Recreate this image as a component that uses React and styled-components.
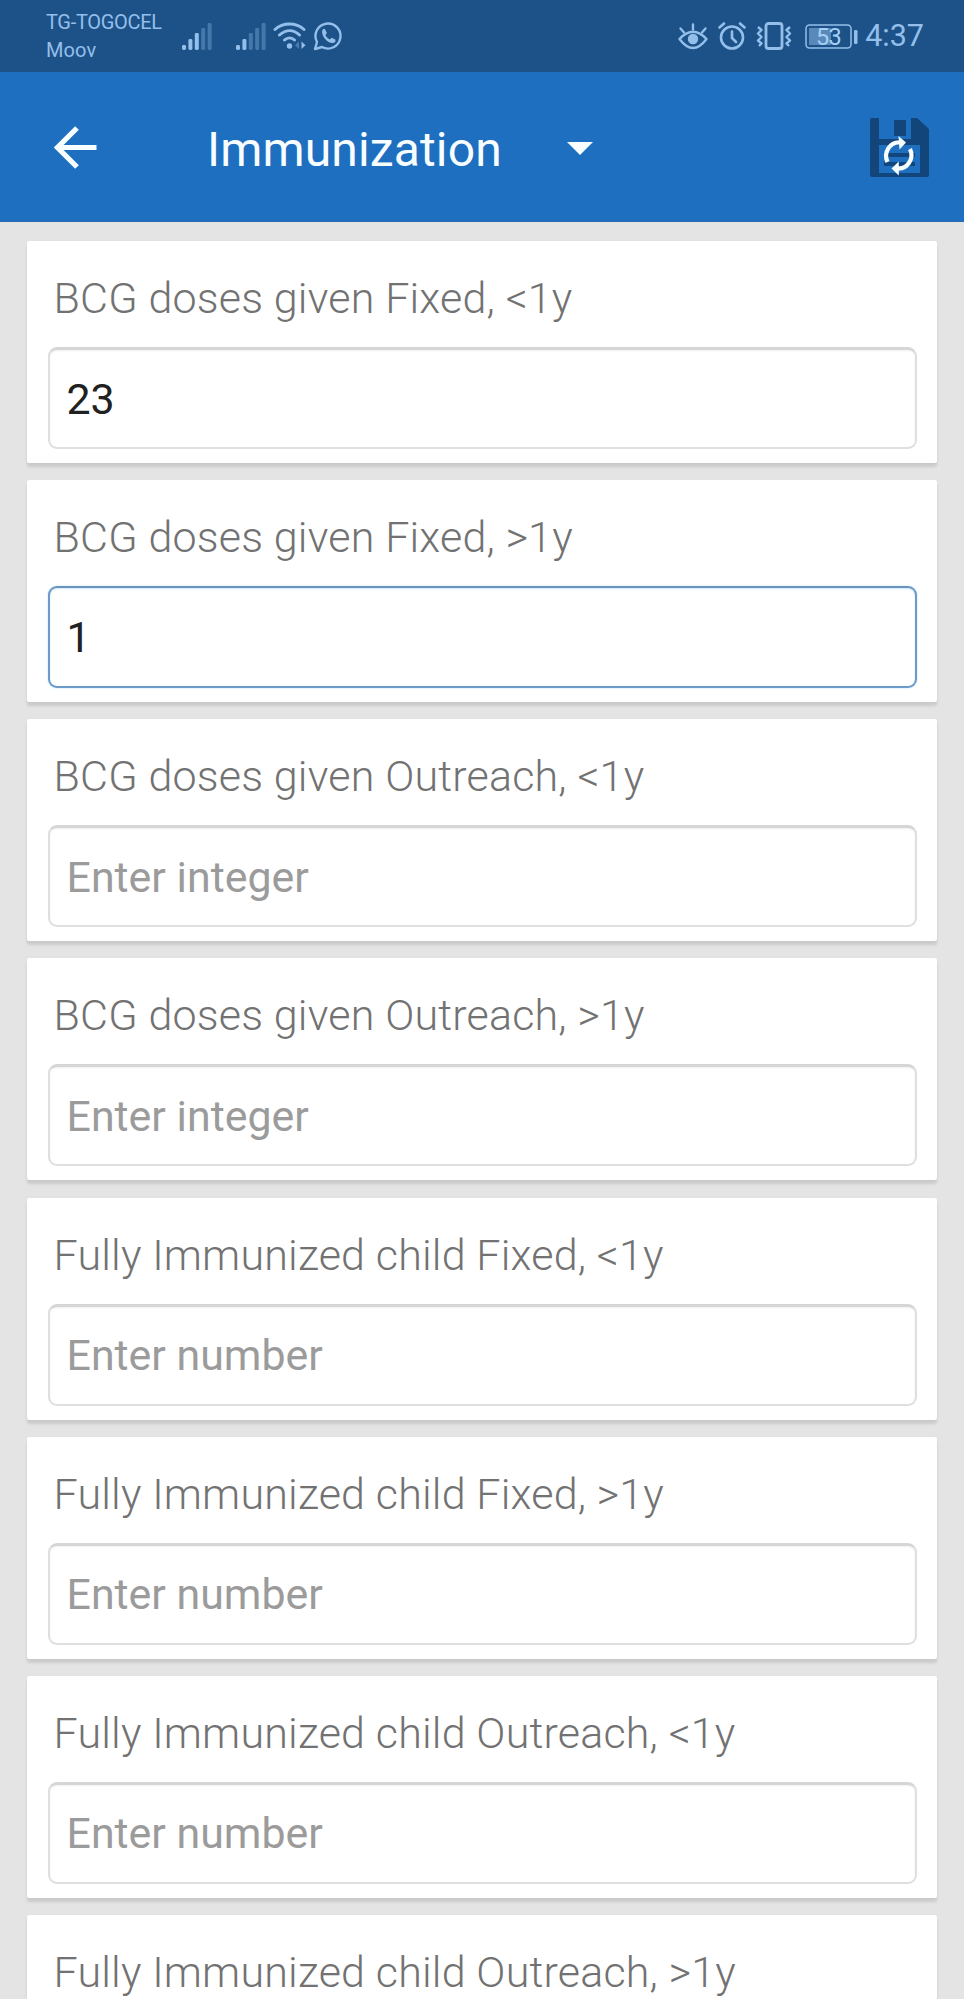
import React from "react";
import styled, { createGlobalStyle } from "styled-components";

const GlobalStyle = createGlobalStyle`
  * { box-sizing: border-box; }
  html, body { margin: 0; padding: 0; }
  body { background: #e4e4e4; font-family: Roboto, "Liberation Sans", sans-serif; }
`;

const Screen = styled.main`
  width: 964px;
  height: 1999px;
  overflow: hidden;
  background: #e4e4e4;
`;

const StatusBar = styled.div`
  display: flex;
  align-items: center;
  height: 72px;
  padding: 0 40px 0 46px;
  background: #1d5288;
  color: #93bfea;
`;

const Carriers = styled.div`
  width: 134px;
  font-size: 20px;
  line-height: 28.5px;
`;

const Carrier = styled.div`
  white-space: nowrap;
  letter-spacing: ${(p) => p.$spacing || "0"};
`;

const StatusIcon = styled.svg`
  flex: none;
  margin-left: ${(p) => p.$gap || 0}px;
`;

const Clock = styled.div`
  margin-left: auto;
  font-size: 30.5px;
  line-height: 72px;
`;

const StatusRight = styled.div`
  display: flex;
  align-items: center;
  margin-left: auto;
  width: 246px;
`;

const AppBar = styled.header`
  display: flex;
  align-items: center;
  height: 150px;
  padding: 1px 35px 0 54px;
  background: #1f6fc1;
  border-bottom: 1px solid #2a6bac;
`;

const Title = styled.h1`
  margin: 5px 0 0 110px;
  width: 296px;
  white-space: nowrap;
  color: #f8feff;
  font-size: 48px;
  font-weight: 400;
  line-height: 60px;
  letter-spacing: 0.15px;
`;

const Caret = styled.svg`
  margin: 3px 0 0 64px;
`;

const SaveIcon = styled.svg`
  margin-left: auto;
`;

const Form = styled.section`
  display: flex;
  flex-direction: column;
  gap: 17.15px;
  padding: 19px 27px 0 27px;
`;

const Card = styled.div`
  flex: none;
  height: 222px;
  padding: 29px 20.5px 0 20.5px;
  background: #fff;
  border-radius: 2px;
  box-shadow: 0 4px 3px rgba(0, 0, 0, 0.11), 0 0 2px rgba(0, 0, 0, 0.04);
`;

const Label = styled.label`
  display: block;
  height: 77px;
  padding-left: 6px;
  color: #727272;
  font-size: 43px;
  font-weight: 300;
  line-height: 56px;
  letter-spacing: 0.18px;
  white-space: nowrap;
`;

const Input = styled.input`
  display: block;
  width: 100%;
  height: 102px;
  padding: 0 17px;
  border: 2px solid ${(p) => (p.$active ? "#6c9bc9" : "#dfdfdf")};
  border-top: ${(p) => (p.$active ? "2px solid #6c94bb" : "3px solid #d6d6d6")};
  border-radius: 9px;
  outline: none;
  background: #fff;
  box-shadow: ${(p) => (p.$active ? "0 0 2px #b5dcff, inset 0 1px 2px #cce8ff" : "inset 0 1px 2px #f0f0f0")};
  color: #212121;
  font-family: inherit;
  font-size: 42.900px;
  &::placeholder { color: #9b9b9b; opacity: 1; }
`;

const fields = [
  { label: "BCG doses given Fixed, <1y", value: "23", hint: "Enter integer" },
  { label: "BCG doses given Fixed, >1y", value: "1", hint: "Enter integer", active: true },
  { label: "BCG doses given Outreach, <1y", hint: "Enter integer" },
  { label: "BCG doses given Outreach, >1y", hint: "Enter integer" },
  { label: "Fully Immunized child Fixed, <1y", hint: "Enter number" },
  { label: "Fully Immunized child Fixed, >1y", hint: "Enter number" },
  { label: "Fully Immunized child Outreach, <1y", hint: "Enter number" },
  { label: "Fully Immunized child Outreach, >1y", hint: "Enter number" },
];

function Signal({ level, gap }) {
  const heights = [5, 11, 17, 22, 27];
  return (
    <StatusIcon $gap={gap} width="30" height="28" viewBox="0 0 30 28" fill="#93bfea">
      {heights.map((h, i) => (
        <rect key={h} x={i * 6.4} y={28 - h} width="4" height={h} rx="1.4" opacity={i < level ? 1 : 0.35} />
      ))}
    </StatusIcon>
  );
}

function Wifi() {
  return (
    <StatusIcon $gap={7} width="34" height="28" viewBox="0 0 34 28" fill="none" stroke="#93bfea" strokeWidth="3" strokeLinecap="round">
      <path d="M2 7.5C10 .2 23 .2 31 7.5M6.5 13C13 7.2 20.5 7.2 26.5 13M11.5 18C14.5 15.2 18.5 15.2 21.5 18" />
      <circle cx="16.500" cy="24" r="2.700" fill="#93bfea" stroke="none" />
      <path d="M26 19.500V27l-4-3.700z" fill="#93bfea" stroke="none" opacity=".4" />
      <path d="M28.500 19.500V27l4-3.700z" fill="#93bfea" stroke="none" />
    </StatusIcon>
  );
}

function WhatsApp() {
  return (
    <StatusIcon $gap={6} width="30" height="30" viewBox="0 0 30 30" fill="none" stroke="#93bfea" strokeWidth="2.400" strokeLinejoin="round">
      <path d="M2 28l2-7A12.500 12.500 0 1 1 9 26z" />
      <path d="M9.500 8.500l2.200-.7 2.200 4.300-1.500 2c.9 2.100 2.200 3.400 4.300 4.300l2-1.600 3.900 2-.5 2.500c-5.800 3.700-15-6.500-12.600-12.800z" fill="#93bfea" stroke="none" />
    </StatusIcon>
  );
}

function Eye() {
  return (
    <StatusIcon width="30" height="27" viewBox="0 0 30 27" fill="none" stroke="#93bfea" strokeWidth="2.400" strokeLinecap="round">
      <path d="M1.500 16Q15 1.500 28.500 16Q15 34 1.500 16z" strokeLinejoin="round" />
      <path d="M15 1.500v5M2.500 5.500l3.500 4M27.500 5.500l-3.500 4" />
      <circle cx="15" cy="16" r="5.200" fill="#93bfea" stroke="none" />
    </StatusIcon>
  );
}

function Alarm() {
  return (
    <StatusIcon $gap={10} width="28" height="28" viewBox="0 0 28 28" fill="none" stroke="#93bfea" strokeWidth="2.600" strokeLinecap="round">
      <circle cx="14" cy="15.500" r="11" />
      <path d="M1.500 5.500L6 1.500M26.500 5.500L22 1.500M14 9.500V16l4 4" />
    </StatusIcon>
  );
}

function Vibrate() {
  return (
    <StatusIcon $gap={9} width="38" height="28" viewBox="0 0 38 28" fill="none" stroke="#93bfea" strokeWidth="2.800" strokeLinejoin="round">
      <rect x="11" y="1.500" width="16" height="25" rx="2.500" />
      <path d="M3 5l3.500 3L3 11.500 6.500 15 3 18.500l3.500 3L4 24M35 5l-3.500 3 3.500 3.500-3.500 3.500 3.500 3.500-3.500 3L34 24" strokeWidth="2.400" />
    </StatusIcon>
  );
}

function Battery() {
  return (
    <StatusIcon $gap={12} width="54" height="25" viewBox="0 0 54 25">
      <rect x="1" y="1" width="45" height="23" rx="3.500" fill="none" stroke="#93bfea" strokeWidth="1.500" />
      <rect x="4" y="4" width="22" height="17" fill="#93bfea" opacity=".5" />
      <rect x="49" y="6" width="3.500" height="14" rx="1.200" fill="#93bfea" />
      <text x="23.500" y="20.500" textAnchor="middle" fontFamily="Roboto, sans-serif" fontSize="23.500" letterSpacing="-0.6" fill="#a5cff4">53</text>
    </StatusIcon>
  );
}

export default function App() {
  return (
    <>
      <GlobalStyle />
      <Screen>
        <StatusBar>
          <Carriers>
            <Carrier $spacing="-0.3px">TG-TOGOCEL</Carrier>
            <Carrier $spacing="0.1px">Moov</Carrier>
          </Carriers>
          <Signal level={3} gap={2} />
          <Signal level={2} gap={24} />
          <Wifi />
          <WhatsApp />
          <StatusRight>
            <Eye />
            <Alarm />
            <Vibrate />
            <Battery />
            <Clock>4:37</Clock>
          </StatusRight>
        </StatusBar>
        <AppBar>
          <svg width="43" height="43" viewBox="0 0 43 43" fill="none" stroke="#f8feff" strokeWidth="5.200">
            <path d="M42.500 21.500H4M23 2L3.500 21.500 23 41" />
          </svg>
          <Title>Immunization</Title>
          <Caret width="26" height="13" viewBox="0 0 26 13" fill="#f8feff">
            <path d="M0 0h26L13 13z" />
          </Caret>
          <SaveIcon width="59" height="59" viewBox="0 0 59 59">
            <path d="M2 0H9V21H41V0H47L59 11V57Q59 59 57 59H2Q0 59 0 57V2Q0 0 2 0zM9 27V55H50V27z" fill="#12457a" fillRule="evenodd" />
            <path d="M24 2h12v16H24zM14 35h31v4H14zM14 44h31v4H14z" fill="#12457a" />
            <g fill="none" stroke="#f8feff" strokeWidth="4.200">
              <path d="M17.500 44A13 13.500 0 0 1 30 24.500" />
              <path d="M40 31A13 13.500 0 0 1 27 50.500" />
            </g>
            <path d="M28.500 18l7.500 6.500-6.500 7zM28.800 43.500V57.500l-7.300-7z" fill="#f8feff" />
          </SaveIcon>
        </AppBar>
        <Form>
          {fields.map((f) => (
            <Card key={f.label}>
              <Label>{f.label}</Label>
              <Input $active={f.active} defaultValue={f.value} placeholder={f.hint} />
            </Card>
          ))}
        </Form>
      </Screen>
    </>
  );
}
